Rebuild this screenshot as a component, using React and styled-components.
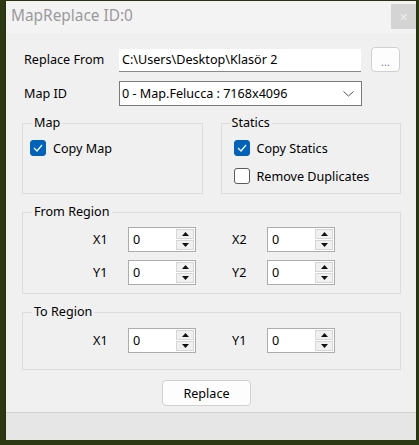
import React from "react";
import styled, { createGlobalStyle } from "styled-components";

const GlobalStyle = createGlobalStyle`
  html, body {
    margin: 0;
    padding: 0;
    background: #2d3912;
    font-family: "Noto Sans", "Liberation Sans", sans-serif;
    font-size: 12.6px;
    color: #000;
  }
`;

const Window = styled.div`
  margin: 1px 0 0 6px;
  width: 410px;
  height: 439px;
  background: #f0f0f0;
  display: flex;
  flex-direction: column;
  box-shadow: 0 0 2px rgba(0, 0, 0, 0.4);
`;

const TitleBar = styled.div`
  height: 32px;
  display: flex;
  align-items: flex-start;
  justify-content: space-between;
  background: #f3f3f3;
`;

const Title = styled.div`
  font-size: 15.4px;
  color: #9a9a9a;
  padding: 5px 0 0 5px;
  line-height: 20px;
`;

const CloseButton = styled.div`
  margin-top: 3px;
  width: 25px;
  height: 25px;
  background: #d4d4d4;
  color: #ececec;
  display: flex;
  align-items: center;
  justify-content: center;
  font-size: 11px;
`;

const Body = styled.div`
  flex: 1;
  display: flex;
  flex-direction: column;
  padding: 14px 15px 6px 16px;
`;

const Row = styled.div`
  display: flex;
  align-items: center;
  height: 25px;
  margin-top: ${(p) => p.top || 0}px;
`;

const FieldLabel = styled.div`
  width: 95px;
  margin-left: 2px;
`;

const TextBox = styled.div`
  width: 242px;
  height: 23px;
  margin-top: 1px;
  background: #fff;
  border-bottom: 1px solid #8a8a8a;
  display: flex;
  align-items: center;
  padding-left: 3px;
  box-sizing: border-box;
  white-space: nowrap;
`;

const BrowseButton = styled.div`
  margin-left: 10px;
  width: 29px;
  height: 25px;
  box-sizing: border-box;
  border: 1px solid #d0d0d0;
  border-radius: 4px;
  background: #fdfdfd;
  color: #7a7a9a;
  font-size: 11px;
  display: flex;
  align-items: center;
  justify-content: center;
  padding-top: 4px;
`;

const ComboBox = styled.div`
  width: 243px;
  height: 25px;
  box-sizing: border-box;
  border: 1px solid #7a7a7a;
  background: #fff;
  display: flex;
  align-items: center;
  justify-content: space-between;
  padding: 0 7px 0 2px;
`;

const GroupRow = styled.div`
  display: flex;
  gap: 18px;
  margin-top: 9px;
`;

const Group = styled.fieldset`
  margin: ${(p) => p.top || 0}px 0 0 0;
  padding: 0;
  width: ${(p) => p.width}px;
  height: ${(p) => p.height}px;
  box-sizing: border-box;
  border: 1px solid #dcdcdc;
  min-width: 0;
`;

const Legend = styled.legend`
  margin-left: ${(p) => p.offset || 9}px;
  padding: 0 2px;
  line-height: 16px;
`;

const CheckList = styled.div`
  display: flex;
  flex-direction: column;
  gap: 12px;
  padding: 9px 0 0 ${(p) => p.left}px;
`;

const CheckRow = styled.label`
  display: flex;
  align-items: center;
  height: 16px;
  gap: 7px;
`;

const Box = styled.span`
  width: 16px;
  height: 16px;
  box-sizing: border-box;
  border-radius: 3px;
  display: flex;
  align-items: center;
  justify-content: center;
  background: ${(p) => (p.checked ? "#0063b8" : "#fff")};
  border: 1px solid ${(p) => (p.checked ? "#0063b8" : "#5a5a5a")};
`;

const SpinGrid = styled.div`
  display: grid;
  grid-template-columns: 35px 68px 36px 35px 68px;
  row-gap: 8px;
  align-items: center;
  padding: ${(p) => p.top}px 0 0 70px;
`;

const SpinLabel = styled.div`
  line-height: 25px;
`;

const Spin = styled.div`
  width: 68px;
  height: 25px;
  box-sizing: border-box;
  border: 1px solid #acacac;
  background: #fff;
  display: flex;
  padding: 1px;
`;

const SpinValue = styled.div`
  flex: 1;
  padding: 2px 0 0 3px;
  line-height: 18px;
`;

const SpinButtons = styled.div`
  width: 18px;
  display: flex;
  flex-direction: column;
  gap: 1px;
`;

const SpinBtn = styled.div`
  flex: 1;
  background: #f0f0f0;
  border: 1px solid #d6d6d6;
  display: flex;
  align-items: center;
  justify-content: center;
`;

const ButtonRow = styled.div`
  display: flex;
  margin-top: 10px;
  padding-left: 140px;
`;

const PushButton = styled.div`
  width: 89px;
  height: 26px;
  box-sizing: border-box;
  border: 1px solid #d0d0d0;
  border-radius: 4px;
  background: #fdfdfd;
  display: flex;
  align-items: center;
  justify-content: center;
`;

const StatusBar = styled.div`
  height: 28px;
  background: #e6e6e6;
  border-top: 1px solid #d2d2d2;
  box-sizing: border-box;
`;

const Check = () => (
  <svg width="10" height="8" viewBox="0 0 10 8">
    <polyline points="1,4 4,7 9,1" fill="none" stroke="#fff" strokeWidth="1.2" />
  </svg>
);

const CheckBox = ({ checked, label }) => (
  <CheckRow>
    <Box checked={checked}>{checked && <Check />}</Box>
    <span>{label}</span>
  </CheckRow>
);

const Arrow = ({ down }) => (
  <svg width="7" height="4" viewBox="0 0 7 4">
    <polygon points={down ? "0,0 7,0 3.5,4" : "0,4 7,4 3.5,0"} fill="#111" />
  </svg>
);

const NumericUpDown = ({ value }) => (
  <Spin>
    <SpinValue>{value}</SpinValue>
    <SpinButtons>
      <SpinBtn>
        <Arrow />
      </SpinBtn>
      <SpinBtn>
        <Arrow down />
      </SpinBtn>
    </SpinButtons>
  </Spin>
);

const SpinField = ({ label, value }) => (
  <>
    <SpinLabel>{label}</SpinLabel>
    <NumericUpDown value={value} />
  </>
);

const Gap = () => <div />;

export default function App() {
  return (
    <>
      <GlobalStyle />
      <Window>
        <TitleBar>
          <Title>MapReplace ID:0</Title>
          <CloseButton>✕</CloseButton>
        </TitleBar>
        <Body>
          <Row>
            <FieldLabel>Replace From</FieldLabel>
            <TextBox>C:\Users\Desktop\Klasör 2</TextBox>
            <BrowseButton>...</BrowseButton>
          </Row>
          <Row top={9}>
            <FieldLabel>Map ID</FieldLabel>
            <ComboBox>
              <span>0 - Map.Felucca : 7168x4096</span>
              <svg width="11" height="6" viewBox="0 0 11 6">
                <polyline points="0.5,0.5 5.5,5 10.5,0.5" fill="none" stroke="#555" strokeWidth="1" />
              </svg>
            </ComboBox>
          </Row>
          <GroupRow>
            <Group width={181} height={79}>
              <Legend>Map</Legend>
              <CheckList left={7}>
                <CheckBox checked label="Copy Map" />
              </CheckList>
            </Group>
            <Group width={181} height={79}>
              <Legend offset={8}>Statics</Legend>
              <CheckList left={12}>
                <CheckBox checked label="Copy Statics" />
                <CheckBox label="Remove Duplicates" />
              </CheckList>
            </Group>
          </GroupRow>
          <Group width={379} height={90} top={10}>
            <Legend>From Region</Legend>
            <SpinGrid top={7}>
              <SpinField label="X1" value="0" />
              <Gap />
              <SpinField label="X2" value="0" />
              <SpinField label="Y1" value="0" />
              <Gap />
              <SpinField label="Y2" value="0" />
            </SpinGrid>
          </Group>
          <Group width={379} height={66} top={10}>
            <Legend>To Region</Legend>
            <SpinGrid top={8}>
              <SpinField label="X1" value="0" />
              <Gap />
              <SpinField label="Y1" value="0" />
            </SpinGrid>
          </Group>
          <ButtonRow>
            <PushButton>Replace</PushButton>
          </ButtonRow>
        </Body>
        <StatusBar />
      </Window>
    </>
  );
}
